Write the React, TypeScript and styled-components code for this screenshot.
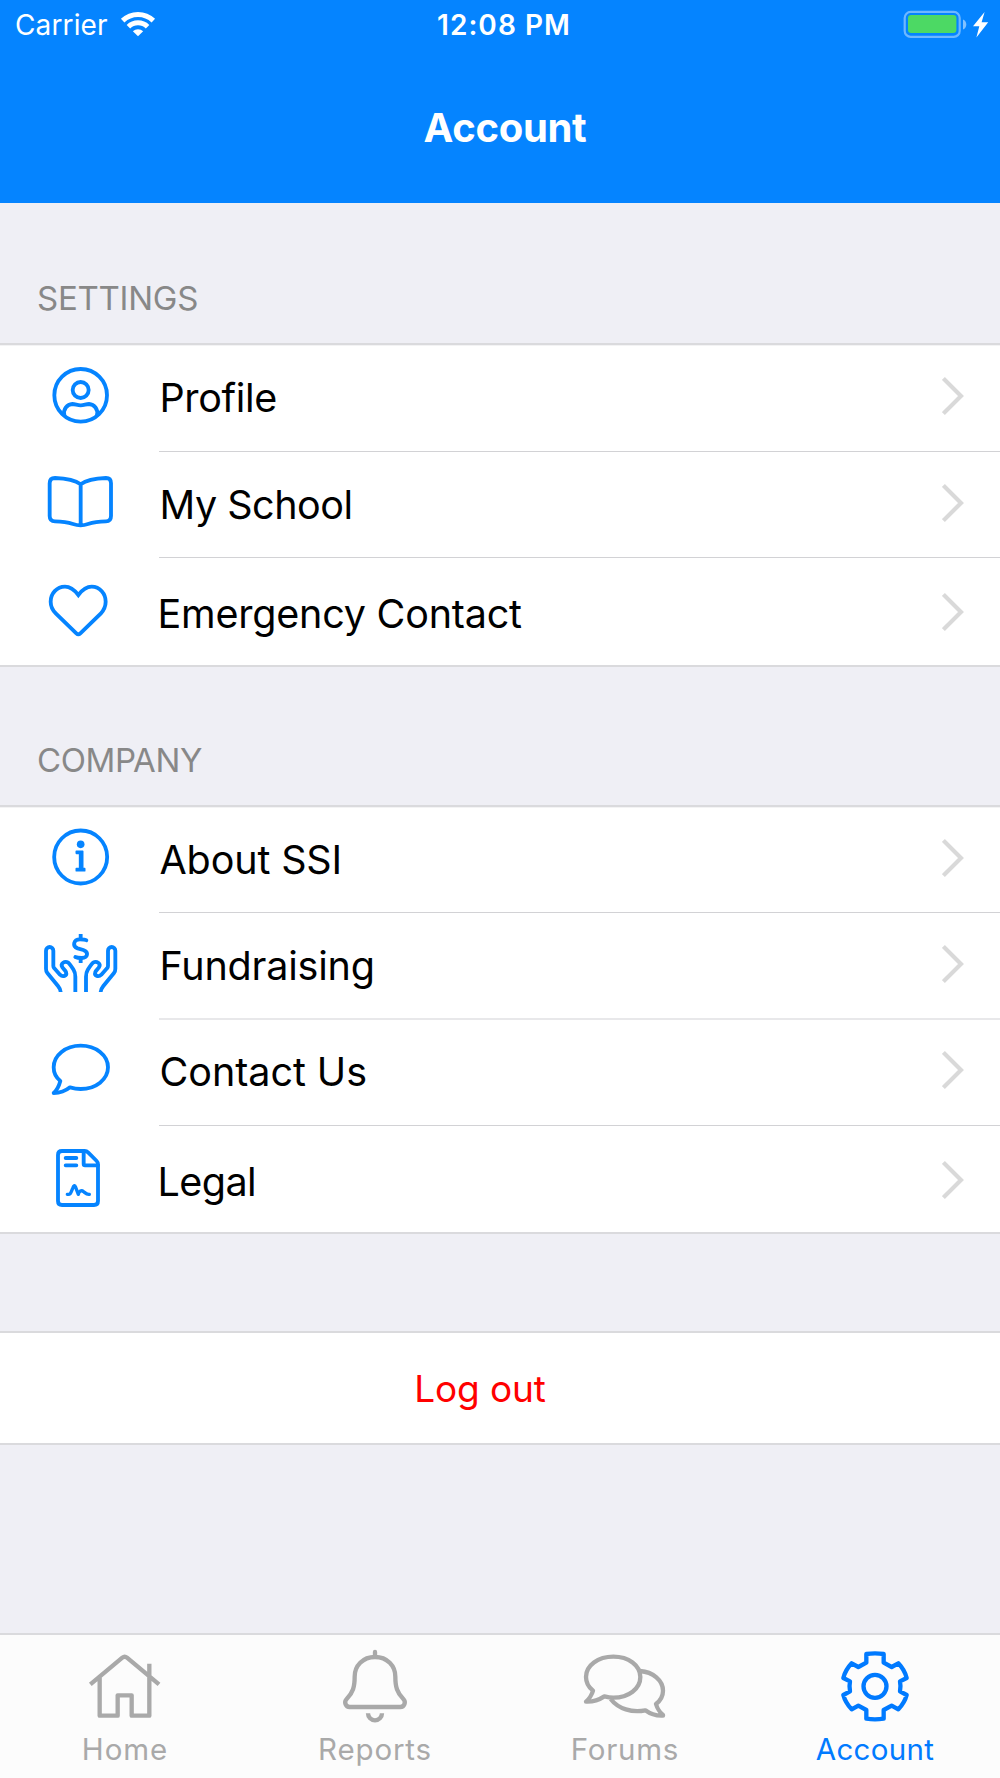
import React from "react";
import type { ReactNode } from "react";
import styled, { createGlobalStyle } from "styled-components";

const color = {
  header: "#0584ff",
  icon: "#0584ff",
  active: "#007aff",
  muted: "#a9a9a9",
  page: "#efeff5",
  line: "#dadadd",
  separator: "#d2d2d5",
};

const GlobalStyle = createGlobalStyle`
  * { box-sizing: border-box; }
  body {
    margin: 0;
    background: ${color.page};
    font-family: Inter, "Liberation Sans", sans-serif;
  }
`;

const Screen = styled.div`
  display: flex;
  flex-direction: column;
  width: 1000px;
  height: 1778px;
  overflow: hidden;
  background: ${color.page};
`;

const Header = styled.header`
  display: flex;
  flex-direction: column;
  height: 203px;
  background: ${color.header};
  color: #fff;
`;

const StatusBar = styled.div`
  display: flex;
  height: 50px;
  line-height: 51px;
  font-size: 28px;
`;

const Carrier = styled.div`
  display: flex;
  width: 437px;
  padding-left: 15px;
  letter-spacing: 0.13px;
  svg {
    margin-left: 10px;
  }
`;

const Clock = styled.div`
  flex: 1;
  font-weight: 600;
  letter-spacing: 1.05px;
`;

const Title = styled.h1`
  margin: 0;
  padding-left: 10px;
  line-height: 155px;
  font-size: 40px;
  font-weight: 700;
  letter-spacing: -0.3px;
  text-align: center;
`;

const SectionLabel = styled.h2<{ $height: number; $track: number }>`
  display: flex;
  align-items: flex-end;
  height: ${(p) => p.$height}px;
  margin: 0;
  padding: 0 0 25px 37px;
  color: #888;
  font-size: 33px;
  font-weight: 400;
  line-height: 40px;
  letter-spacing: ${(p) => p.$track}px;
`;

const List = styled.div`
  border-top: 2px solid ${color.line};
  border-bottom: 2px solid ${color.line};
  background: #fff;
  box-shadow: inset 0 1px 0 #f3f3f4;
`;

const RowBox = styled.div<{ $last: boolean; $height: number; $top: number }>`
  display: grid;
  grid-template-columns: ${(p) => (p.$last ? 157.5 : 159.5)}px 1fr 58px;
  height: ${(p) => p.$height}px;
  padding-top: ${(p) => p.$top}px;
`;

const Separator = styled.div<{ $soft?: boolean }>`
  height: ${(p) => (p.$soft ? 2 : 1)}px;
  margin-left: 159px;
  background: ${(p) => (p.$soft ? "#e8e8ea" : color.separator)};
`;

const RowIcon = styled.svg`
  width: 80px;
  height: 64px;
  margin-left: 40px;
  fill: none;
  stroke: ${color.icon};
  stroke-width: 11.5;
  stroke-linecap: round;
  stroke-linejoin: round;
`;

const RowText = styled.span<{ $track: number }>`
  padding-top: 2px;
  color: #000;
  font-size: 39.5px;
  line-height: 64px;
  white-space: nowrap;
  letter-spacing: ${(p) => p.$track}px;
`;

const ChevronIcon = styled.svg`
  width: 24px;
  height: 64px;
  fill: none;
  stroke: #d9d9d9;
  stroke-width: 4.2;
`;

const LogoutButton = styled.button`
  width: 100%;
  height: 114px;
  margin-top: 97px;
  padding: 1px 40px 0 0;
  border: 0;
  border-top: 2px solid ${color.line};
  border-bottom: 2px solid ${color.line};
  background: #fff;
  color: #f00;
  font: 400 37px/109px Inter, "Liberation Sans", sans-serif;
  letter-spacing: -0.13px;
`;

const TabBar = styled.nav`
  display: grid;
  grid-template-columns: repeat(4, 1fr);
  height: 145px;
  margin-top: auto;
  border-top: 2px solid ${color.line};
  background: #fcfcfc;
`;

const TabItem = styled.div<{ $active?: boolean; $track: number }>`
  display: flex;
  flex-direction: column;
  align-items: center;
  color: ${(p) => (p.$active ? color.active : color.muted)};
  font-size: 29.5px;
  line-height: 44px;
  letter-spacing: ${(p) => p.$track}px;
`;

const TabIcon = styled.svg`
  width: 100px;
  height: 92px;
  fill: none;
  stroke: currentColor;
  stroke-width: 13;
  stroke-linejoin: round;
`;

const WifiIcon = () => (
  <svg width="40" height="50" viewBox="0 0 120 150" fill="none" stroke="#fff" strokeWidth="15">
    <path d="M14 62 A66 66 0 0 1 106 62" />
    <path d="M31.3 80 A41 41 0 0 1 88.7 80" />
    <path d="M60 109 L44.5 93.5 A23 23 0 0 1 75.5 93.5 Z" fill="#fff" stroke="none" />
  </svg>
);

const BatteryIcon = () => (
  <svg width="100" height="50" viewBox="0 0 100 50" fill="none">
    <rect x="4.7" y="11.9" width="55" height="25" rx="6" stroke="#fff" strokeOpacity=".42" strokeWidth="2.2" />
    <rect x="8" y="15" width="48.4" height="18" rx="3.2" fill="#4cd964" />
    <path d="M63 19.5 C67.4 21 67.4 28 63 29.5 Z" fill="#fff" fillOpacity=".5" />
    <path d="M84.6 12 L73 26.2 H79.3 L76.4 37.6 L88.2 22.2 H81.6 Z" fill="#fff" />
  </svg>
);

const Chevron = () => (
  <ChevronIcon viewBox="0 0 24 64">
    <path d="M1.4 14.4 L19 32 L1.4 49.6" />
  </ChevronIcon>
);

type RowProps = {
  label: string;
  track: number;
  viewBox: string;
  height: number;
  top?: number;
  last?: boolean;
  children: ReactNode;
};

const Row = ({ label, track, viewBox, height, top = 19, last = false, children }: RowProps) => (
  <RowBox $last={last} $height={height} $top={top}>
    <RowIcon viewBox={viewBox}>{children}</RowIcon>
    <RowText $track={track}>{label}</RowText>
    <Chevron />
  </RowBox>
);

export default function App() {
  return (
    <Screen>
      <GlobalStyle />
      <Header>
        <StatusBar>
          <Carrier>
            Carrier
            <WifiIcon />
          </Carrier>
          <Clock>12:08 PM</Clock>
          <BatteryIcon />
        </StatusBar>
        <Title>Account</Title>
      </Header>

      <SectionLabel $height={140} $track={-0.25}>SETTINGS</SectionLabel>
      <List>
        <Row label="Profile" track={-0.36} height={106} viewBox="30 42 240 192">
          <circle cx="152" cy="136" r="79" />
          <circle cx="152" cy="120" r="24" />
          <path d="M103 195 C99 178 111 163 127 162 C136 162 142 166 152 166 C162 166 168 162 177 162 C193 163 205 178 201 195" />
        </Row>
        <Separator />
        <Row label="My School" track={-0.48} height={105} viewBox="30 363 240 192">
          <path d="M152 403 C136 391 102 385 75 384 Q59 384 59 400 V498 Q59 514 75 514 C98 514 115 517 129 522 Q152 530 174 522 C188 517 205 514 228 514 Q243 514 243 498 V400 Q243 384 228 384 C201 385 168 391 152 403 Z M152 403 V525" />
        </Row>
        <Separator />
        <Row label="Emergency Contact" track={-0.22} height={107} top={22} viewBox="30 690 240 192" last>
          <path
            strokeLinejoin="miter"
            d="M145 735 C135 722 123 710 105 710 C80 710 62 731 62 755 C62 770 68 781 78 791 L139 850 Q145 856 151 850 L212 791 C221 781 227 770 227 755 C227 731 210 710 185 710 C167 710 155 722 145 735 Z"
          />
        </Row>
      </List>

      <SectionLabel $height={138} $track={-0.42}>COMPANY</SectionLabel>
      <List>
        <Row label="About SSI" track={-0.14} height={105} viewBox="60 317 240 192">
          <circle cx="182" cy="410" r="79.5" />
          <circle cx="182" cy="372" r="11.5" fill={color.icon} stroke="none" />
          <path d="M169 393 H188 V445 H194 V451 H169 V445 H179 V399 H169 Z" fill={color.icon} strokeWidth="5" />
        </Row>
        <Separator />
        <Row label="Fundraising" track={-0.21} height={105} viewBox="60 636 240 192">
          <g strokeLinecap="butt">
            <path d="M122 816 Q122 808 114 798 L82 759 Q78 754 78 746 V692 A11 11 0 0 1 100 692 V738 Q100 742 103 745 L120 764 C128 772 142 768 138 756 C136 751 130 747 127 742 C120 730 134 722 145 728 C150 732 156 742 161 750 Q166 758 166 770 V816" />
            <path d="M242 816 Q242 808 250 798 L282 759 Q286 754 286 746 V692 A11 11 0 0 0 264 692 V738 Q264 742 261 745 L244 764 C236 772 222 768 226 756 C228 751 234 747 237 742 C244 730 230 722 219 728 C214 732 208 742 203 750 Q198 758 198 770 V816" />
            <path d="M182 642 V657 M182 715 V729" />
          </g>
          <path d="M199 661 C195 658 188 658 180 658 C160 658 156 679 173 685 L190 690 C207 696 204 714 185 714 C177 714 172 714 166 711" />
        </Row>
        <Separator $soft />
        <Row label="Contact Us" track={-0.05} height={105} top={18} viewBox="60 114 240 192">
          <path d="M121 243 C107 232 101 218 101 202 C101 166 137 137 182 137 C228 137 264 166 264 202 C264 238 228 267 182 267 C170 267 160 265 150 262 C138 272 118 279 101 279 C109 272 117 258 121 243 Z" />
        </Row>
        <Separator />
        <Row label="Legal" track={-0.55} height={106} top={22} viewBox="60 444 240 192" last>
          <path d="M126 453 H194 Q200 453 205 458 L230 483 Q234 487 234 493 V603 Q234 615 222 615 H126 Q114 615 114 603 V465 Q114 453 126 453 Z" />
          <path d="M191 453 V492 Q191 496 195 496 H234 M137 474 H169 M137 496 H169" />
          <path d="M142 583 C152 585 153 577 158 565 C161 555 165 555 167 562 L175 583 C177 573 184 569 191 575 C197 580 200 584 208 583" strokeWidth="10" />
        </Row>
      </List>

      <LogoutButton>Log out</LogoutButton>

      <TabBar>
        <TabItem $track={0.95}>
          <TabIcon viewBox="225 45 300 276">
            <path d="M271 193 L367 113 Q374 107 381 113 L477 193 M299 170 V287 H353 V226 H395 V287 H448 V131" />
          </TabIcon>
          Home
        </TabItem>
        <TabItem $track={0.84}>
          <TabIcon viewBox="975 45 300 276">
            <path d="M1125 96 V108" strokeLinecap="round" />
            <path d="M1125 111 C1088 111 1064 138 1064 170 C1064 200 1059 218 1040 237 C1031 246 1037 261 1049 261 H1201 C1213 261 1219 246 1210 237 C1191 218 1186 200 1186 170 C1186 138 1162 111 1125 111 Z" />
            <path d="M1104 280 A21 21 0 0 0 1146 280" />
          </TabIcon>
          Reports
        </TabItem>
        <TabItem $track={0.73}>
          <TabIcon viewBox="225 45 300 276">
            <path d="M279 212 C265 201 258 187 258 171 C258 137 294 110 340 110 C386 110 421 137 421 171 C421 206 386 233 340 233 C330 233 321 231 313 229 C301 237 280 246 258 245 C266 239 276 223 279 212 Z" />
            <path d="M420 153 C459 156 489 181 489 212 C489 228 482 241 468 252 C471 263 481 279 489 285 V287 C468 288 448 280 436 271 C396 279 355 267 332 237" />
          </TabIcon>
          Forums
        </TabItem>
        <TabItem $active $track={0.3}>
          <TabIcon viewBox="975 45 300 276">
            <path d="M1099 102 Q1125 98 1151 102 V128 L1175 141 L1195 130 Q1214 150 1220 174 L1200 184 Q1203 199 1200 214 L1220 225 Q1214 248 1195 268 L1175 257 L1151 270 V296 Q1125 300 1099 296 V270 L1075 257 L1055 268 Q1036 248 1030 225 L1050 214 Q1047 199 1050 184 L1030 174 Q1036 150 1055 130 L1075 141 L1099 128 Z" />
            <circle cx="1125" cy="199" r="34.5" />
          </TabIcon>
          Account
        </TabItem>
      </TabBar>
    </Screen>
  );
}
